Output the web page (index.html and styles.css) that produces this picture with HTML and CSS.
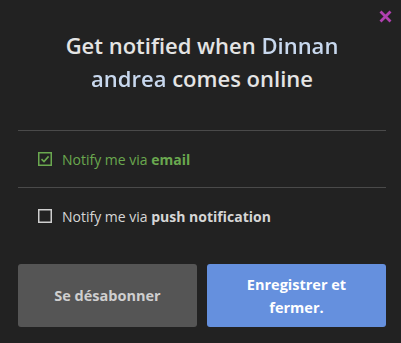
FILE: index.html
```html
<!DOCTYPE html>
<html lang="en">
<head>
  <meta charset="UTF-8" />
  <title>Notify me</title>
  <link rel="stylesheet" href="styles.css">
</head>
<body>

<div class="notify-modal">
  <button class="close-btn" aria-label="Close">
    <svg viewBox="0 0 13 13" width="13" height="13"><path d="M1.5 1.5 L11.5 11.5 M11.5 1.5 L1.5 11.5" stroke="currentColor" stroke-width="2.8"/></svg>
  </button>
  <h2 class="notify-title">Get notified when <span class="masked">Dinnan</span> <span class="masked">andrea</span> comes online</h2>

  <div class="divider"></div>
  <label class="option checked">
    <span class="box">
      <svg viewBox="0 0 14 14" width="14" height="14"><rect x="0.75" y="0.75" width="12.5" height="12.5" fill="none" stroke="currentColor" stroke-width="1.5"/><path d="M3.5 7.2 L6 9.6 L10.6 4.4" fill="none" stroke="currentColor" stroke-width="1.6"/></svg>
    </span>
    <span>Notify me via <b>email</b></span>
  </label>
  <div class="divider"></div>
  <label class="option">
    <span class="box">
      <svg viewBox="0 0 14 14" width="14" height="14"><rect x="0.75" y="0.75" width="12.5" height="12.5" fill="none" stroke="currentColor" stroke-width="1.5"/></svg>
    </span>
    <span>Notify me via <b>push notification</b></span>
  </label>

  <div class="actions">
    <button class="btn btn-grey">Se désabonner</button>
    <button class="btn btn-blue">Enregistrer et fermer.</button>
  </div>
</div>

</body>
</html>
```

FILE: styles.css
```css
body {
  margin: 0;
  background: #222222;
  font-family: "Open Sans", Arial, sans-serif;
  color: #dcdcdc;
}
.notify-modal {
  position: relative;
  width: 401px;
  height: 343px;
  padding: 0 15px 0 18px;
  box-sizing: border-box;
}
.close-btn {
  position: absolute;
  top: 10px;
  right: 9px;
  display: flex;
  background: none;
  border: none;
  padding: 0;
  color: #b040b0;
  cursor: pointer;
}
.notify-title {
  margin: 0;
  padding: 29px 26px 0;
  font-size: 22px;
  font-weight: 600;
  line-height: 33px;
  text-align: center;
  color: #e4e4e4;
}
.masked {
  color: #c8d8ee;
  filter: blur(0.5px);
}
.divider {
  height: 1px;
  background: #4a4a4a;
}
.notify-title + .divider {
  margin-top: 35px;
}
.option {
  display: flex;
  align-items: center;
  height: 56px;
  padding-left: 20px;
  font-size: 14px;
  color: #d6d6d6;
  cursor: pointer;
}
.option.checked {
  color: #6aa84f;
}
.option b {
  font-weight: 700;
}
.box {
  display: flex;
  margin-right: 10px;
  color: #cfcfcf;
}
.option.checked .box {
  color: #6aa84f;
}
.actions {
  display: flex;
  gap: 10px;
  margin-top: 20px;
}
.btn {
  flex: 1;
  height: 63px;
  border: none;
  border-radius: 3px;
  font-family: inherit;
  font-size: 14.5px;
  font-weight: 700;
  line-height: 23px;
  cursor: pointer;
  padding: 0 26px;
}
.btn-grey {
  background: #555555;
  color: #cfcfcf;
}
.btn-blue {
  background: #6590de;
  color: #ffffff;
}
```
